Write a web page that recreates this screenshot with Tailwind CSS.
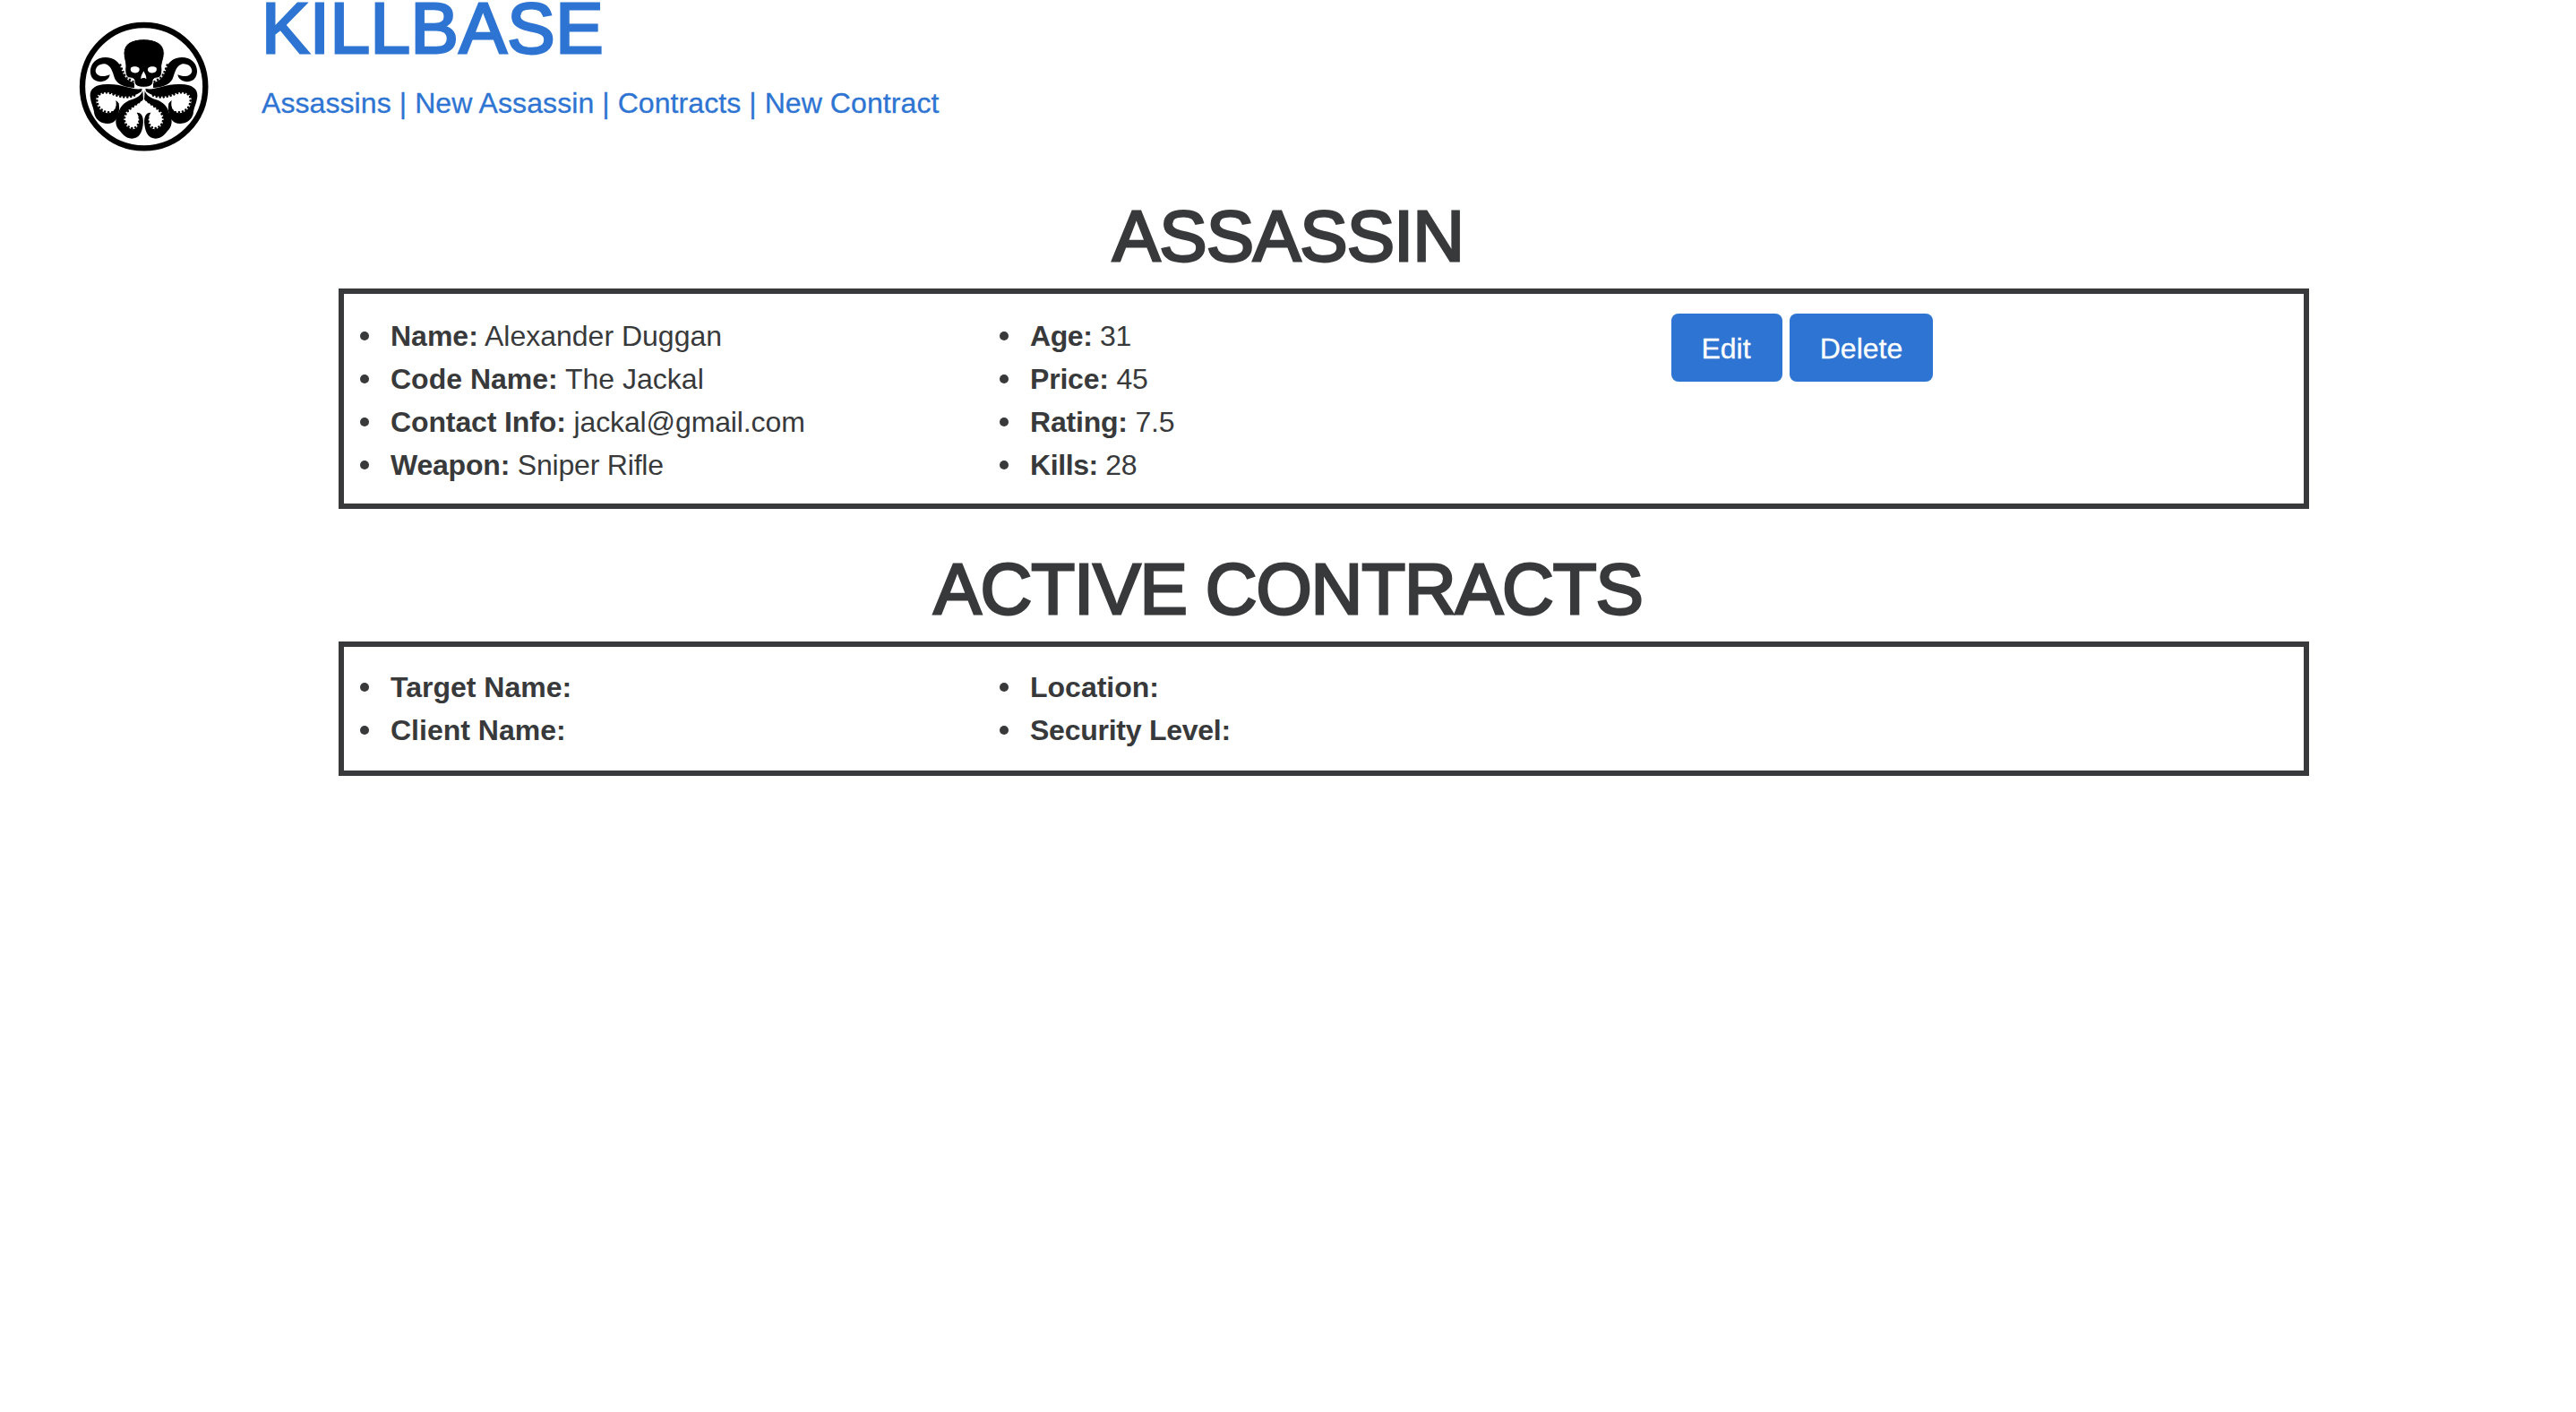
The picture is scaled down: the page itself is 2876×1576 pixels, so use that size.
<!DOCTYPE html>
<html lang="en">
<head>
<meta charset="utf-8">
<title>Killbase</title>
<script src="https://cdn.jsdelivr.net/npm/@tailwindcss/browser@4"></script>
</head>
<body class="min-h-screen overflow-hidden bg-white font-['Helvetica_Neue','Liberation_Sans',sans-serif] text-[32px] leading-[48px] text-[#38393b]">
<header class="flex h-[220px] pl-[70px]">
  <svg class="mt-[10px] h-[170px] w-[180px] shrink-0" viewBox="0 0 540 510">
    <defs>
      <g id="arms">
        <path d="M240 264C212 262 186 254 176 236C168 218 166 194 146 185C128 180 110 192 110 208C112 226 136 230 158 220C154 244 122 250 104 236C86 222 88 180 122 166C152 155 182 168 192 190C200 212 206 238 240 248Z"/>
        <path d="M266 267C235 274 205 252 155 252C112 250 90 266 92 292C94 316 104 330 106 352C112 374 130 384 150 384C174 384 186 366 188 346C190 332 192 314 178 306C182 326 176 346 154 349C130 348 110 326 112 302C114 282 140 274 162 281C190 292 225 304 264 276Z"/>
        <path d="M268 274L270 302C255 318 228 328 212 346C196 372 210 400 235 403C256 400 264 372 248 347C266 346 272 364 269 388C266 416 254 434 232 434C206 432 200 416 188 404C174 388 176 366 186 350C192 326 206 312 230 304C250 298 262 290 268 274Z"/>
        <g fill="none" stroke="#000" stroke-width="8" stroke-linecap="round" stroke-dasharray="0 12">
          <path d="M193 188C202 212 208 230 236 243"/>
          <path d="M184 318C182 340 172 348 155 346C130 346 113 325 115 300C118 280 142 276 163 283C190 296 225 302 250 284"/>
          <path d="M264 304C250 320 230 327 214 347C198 372 210 396 235 400C252 397 262 375 255 354"/>
        </g>
      </g>
    </defs>
    <circle cx="272" cy="260" r="206" fill="none" stroke="#000" stroke-width="19"/>
    <use href="#arms"/>
    <use href="#arms" transform="translate(543 0) scale(-1 1)"/>
    <path stroke="#fff" stroke-width="3" d="M271 101C310 101 340 116 340 148C340 165 333 176 332 192C334 208 332 226 322 230C309 232 304 232 303 240C303 252 297 262 271 262C245 262 240 252 240 240C239 232 234 232 220 230C210 226 208 208 210 192C210 176 204 165 204 148C204 116 232 101 271 101Z"/>
    <path fill="#fff" d="M228 197C236 191 250 191 256 198C261 210 248 217 236 213C228 210 226 204 228 197ZM314 197C306 191 292 191 286 198C281 210 294 217 306 213C314 210 316 204 314 197ZM271 208C276 218 281 226 280 234C275 232 273 229 271 232C269 229 267 232 262 234C261 226 266 218 271 208Z"/>
  </svg>
  <div class="-mt-3 ml-[42px] text-[#2e74d2]">
    <h1 class="text-[80px] leading-[88px] tracking-[0.5px] [-webkit-text-stroke:2.8px_currentColor]"><a href="#">KILLBASE</a></h1>
    <nav class="mt-[15px] whitespace-nowrap tracking-[0.08px] [-webkit-text-stroke:0.3px_currentColor]"><a href="#">Assassins</a> | <a href="#">New Assassin</a> | <a href="#">Contracts</a> | <a href="#">New Contract</a></nav>
  </div>
</header>
<main>
  <section class="h-[394px]">
    <h2 class="text-center text-[80px] leading-[88px] tracking-[-1px] [-webkit-text-stroke:2.8px_currentColor]">ASSASSIN</h2>
    <div class="mt-[14px] ml-[378px] flex h-[246px] w-[2200px] border-[6px] border-[#38393b] pl-[18px]">
      <ul class="w-[716px] pt-[23px]">
        <li class="flex items-center"><i class="mr-[24px] size-[10px] rounded-full bg-[#38393b]"></i><span><b>Name:</b> Alexander Duggan</span></li>
        <li class="flex items-center"><i class="mr-[24px] size-[10px] rounded-full bg-[#38393b]"></i><span><b>Code Name:</b> The Jackal</span></li>
        <li class="flex items-center"><i class="mr-[24px] size-[10px] rounded-full bg-[#38393b]"></i><span class="tracking-[-0.12px]"><b>Contact Info:</b> jackal@gmail.com</span></li>
        <li class="flex items-center"><i class="mr-[24px] size-[10px] rounded-full bg-[#38393b]"></i><span class="tracking-[-0.2px]"><b>Weapon:</b> Sniper Rifle</span></li>
      </ul>
      <ul class="-ml-[2px] w-[750px] pt-[23px]">
        <li class="flex items-center"><i class="mr-[24px] size-[10px] rounded-full bg-[#38393b]"></i><span class="tracking-[-0.4px]"><b>Age:</b> 31</span></li>
        <li class="flex items-center"><i class="mr-[24px] size-[10px] rounded-full bg-[#38393b]"></i><span class="tracking-[-0.2px]"><b>Price:</b> 45</span></li>
        <li class="flex items-center"><i class="mr-[24px] size-[10px] rounded-full bg-[#38393b]"></i><span class="tracking-[-0.2px]"><b>Rating:</b> 7.5</span></li>
        <li class="flex items-center"><i class="mr-[24px] size-[10px] rounded-full bg-[#38393b]"></i><span class="tracking-[-0.4px]"><b>Kills:</b> 28</span></li>
      </ul>
      <div class="mt-[22px] flex gap-2 text-white">
        <button class="h-[76px] w-[124px] rounded-lg bg-[#2e74d2] pt-[2px] pr-[2px] [-webkit-text-stroke:0.3px_currentColor]">Edit</button>
        <button class="h-[76px] w-[160px] rounded-lg bg-[#2e74d2] pt-[2px] [-webkit-text-stroke:0.3px_currentColor]">Delete</button>
      </div>
    </div>
  </section>
  <section>
    <h2 class="text-center text-[80px] leading-[88px] tracking-[-1.1px] [-webkit-text-stroke:2.8px_currentColor]">ACTIVE CONTRACTS</h2>
    <div class="mt-[14px] ml-[378px] flex h-[150px] w-[2200px] border-[6px] border-[#38393b] pl-[18px]">
      <ul class="w-[716px] pt-[21px] font-bold">
        <li class="flex items-center"><i class="mr-[24px] size-[10px] rounded-full bg-[#38393b]"></i>Target Name:</li>
        <li class="flex items-center"><i class="mr-[24px] size-[10px] rounded-full bg-[#38393b]"></i>Client Name:</li>
      </ul>
      <ul class="-ml-[2px] pt-[21px] font-bold">
        <li class="flex items-center"><i class="mr-[24px] size-[10px] rounded-full bg-[#38393b]"></i>Location:</li>
        <li class="flex items-center tracking-[-0.25px]"><i class="mr-[24px] size-[10px] rounded-full bg-[#38393b]"></i>Security Level:</li>
      </ul>
    </div>
  </section>
</main>
</body>
</html>
